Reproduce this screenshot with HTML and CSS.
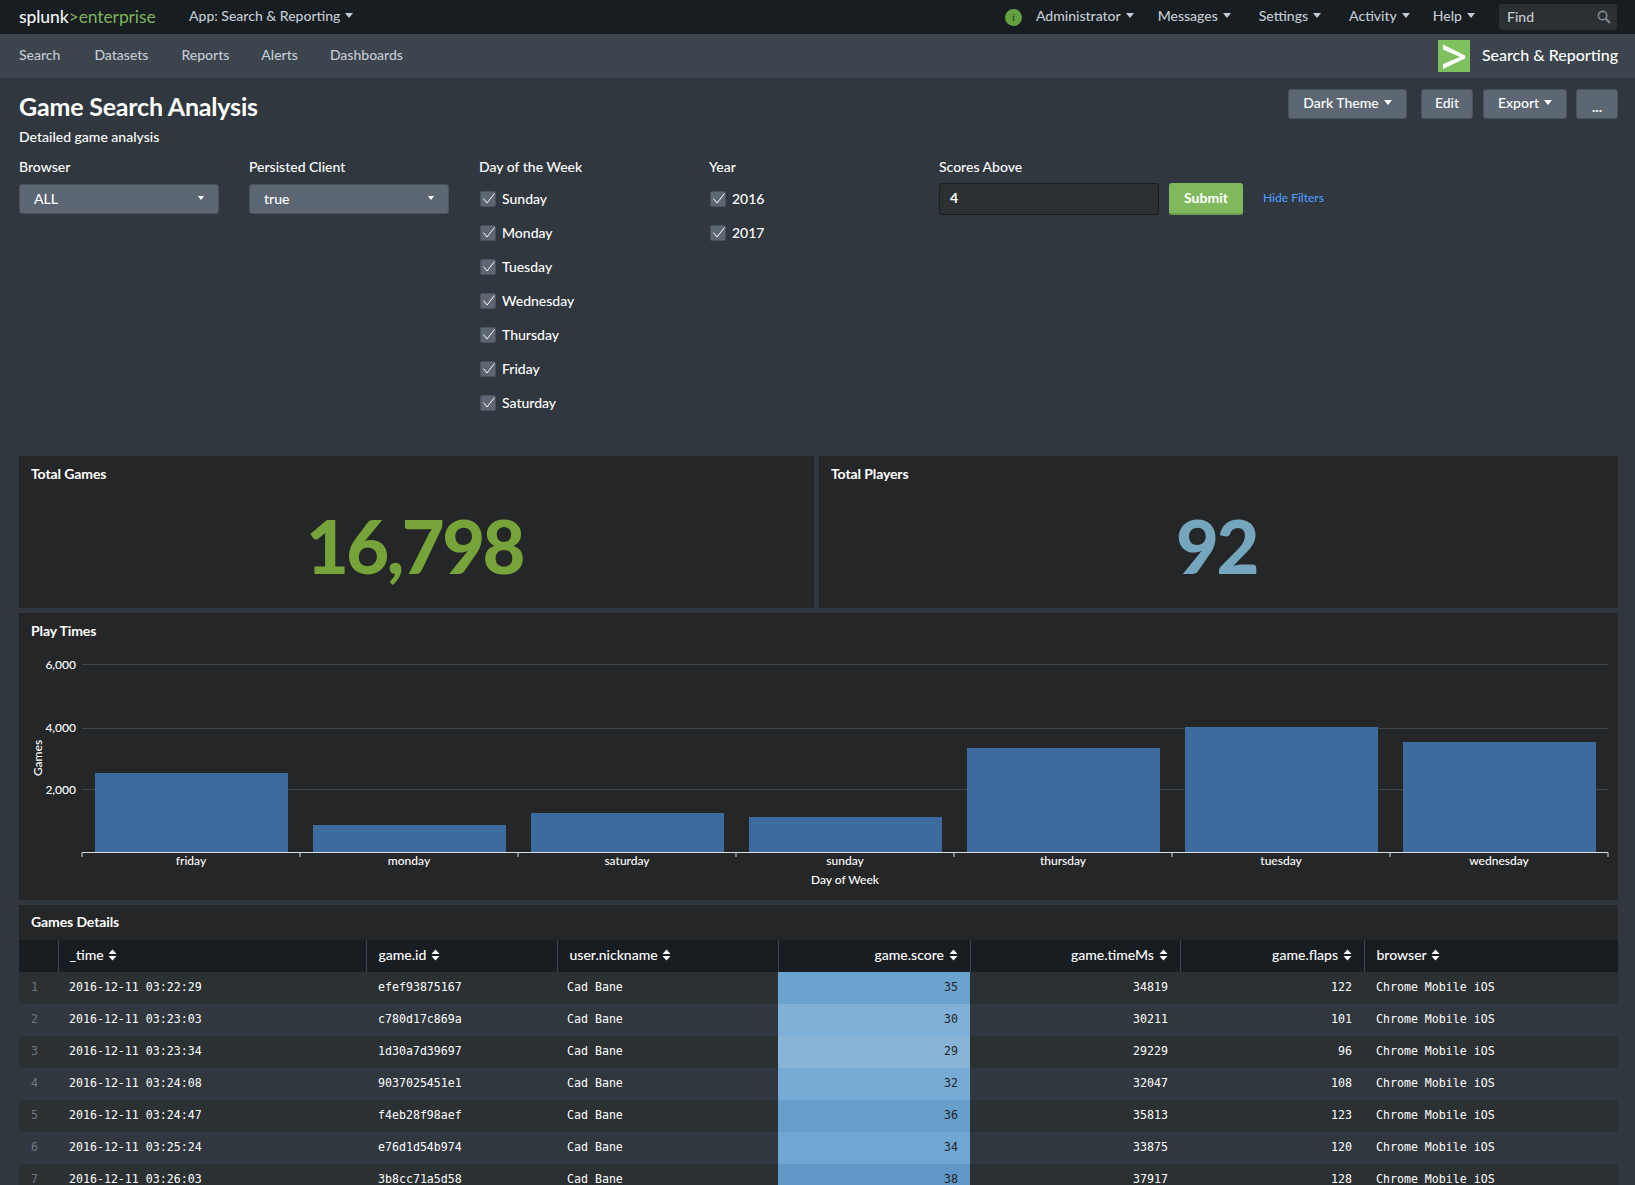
FILE: index.html
```html
<!DOCTYPE html>
<html lang="en">
<head>
<meta charset="utf-8">
<title>Game Search Analysis</title>
<link rel="stylesheet" href="styles.css">
</head>
<body>
<svg class="defs" width="0" height="0" aria-hidden="true">
  <symbol id="sort" viewBox="0 0 9 12"><path d="M4.5 0.5 8.5 5H0.5Z M0.5 7H8.5L4.5 11.5Z" fill="currentColor"/></symbol>
  <symbol id="check" viewBox="0 0 16 16"><path d="M3.5 7.6 7 12 14.5 2.5" fill="none" stroke="currentColor" stroke-width="1"/></symbol>
</svg>
<header class="topbar">
  <div class="logo"><span class="logo-splunk">splunk</span><span class="logo-ent">&gt;enterprise</span></div>
  <a class="top-item app-menu">App: Search &amp; Reporting<i class="caret"></i></a>
  <div class="top-right">
    <span class="info">i</span>
    <a class="top-item item-admin">Administrator<i class="caret"></i></a>
    <a class="top-item item-messages">Messages<i class="caret"></i></a>
    <a class="top-item item-settings">Settings<i class="caret"></i></a>
    <a class="top-item item-activity">Activity<i class="caret"></i></a>
    <a class="top-item item-help">Help<i class="caret"></i></a>
    <div class="find"><span>Find</span>
      <svg class="find-icon" viewBox="0 0 14 14" width="14" height="14"><circle cx="5.6" cy="5.6" r="4.2" fill="none" stroke="currentColor" stroke-width="1.6"/><path d="M8.8 8.8 13 13" stroke="currentColor" stroke-width="2.2"/></svg>
    </div>
  </div>
</header>
<nav class="appbar">
  <a class="nav-search">Search</a><a class="nav-datasets">Datasets</a><a>Reports</a><a>Alerts</a><a>Dashboards</a>
  <div class="app-name">
    <span class="app-icon"><svg viewBox="0 0 32 32" width="32" height="32"><path d="M5 4.5 27 15.5V18.5L5 29V24L22 17 5 9.5Z" fill="#fff"/></svg></span>
    <span class="app-title">Search &amp; Reporting</span>
  </div>
</nav>
<main class="dash">
  <div class="dash-head">
    <div>
      <h1>Game Search Analysis</h1>
      <p class="desc">Detailed game analysis</p>
    </div>
    <div class="actions">
      <button class="btn btn-theme">Dark Theme<i class="caret white"></i></button>
      <button class="btn btn-edit">Edit</button>
      <button class="btn btn-export">Export<i class="caret white"></i></button>
      <button class="btn btn-more">...</button>
    </div>
  </div>
  <section class="filters">
    <div class="field"><label>Browser</label><div class="select"><span>ALL</span><i class="caret white small"></i></div></div>
    <div class="field"><label>Persisted Client</label><div class="select"><span>true</span><i class="caret white small"></i></div></div>
    <div class="field"><label>Day of the Week</label>
      <ul class="checks">
        <li><span class="box"><svg><use href="#check"/></svg></span>Sunday</li>
        <li><span class="box"><svg><use href="#check"/></svg></span>Monday</li>
        <li><span class="box"><svg><use href="#check"/></svg></span>Tuesday</li>
        <li><span class="box"><svg><use href="#check"/></svg></span>Wednesday</li>
        <li><span class="box"><svg><use href="#check"/></svg></span>Thursday</li>
        <li><span class="box"><svg><use href="#check"/></svg></span>Friday</li>
        <li><span class="box"><svg><use href="#check"/></svg></span>Saturday</li>
      </ul>
    </div>
    <div class="field"><label>Year</label>
      <ul class="checks">
        <li><span class="box"><svg><use href="#check"/></svg></span>2016</li>
        <li><span class="box"><svg><use href="#check"/></svg></span>2017</li>
      </ul>
    </div>
    <div class="field"><label>Scores Above</label><div class="score-input">4</div></div>
    <button class="submit">Submit</button>
    <a class="hide-filters">Hide Filters</a>
  </section>
  <section class="singles">
    <div class="panel single"><h2>Total Games</h2><div class="big green">16,798</div></div>
    <div class="panel single"><h2>Total Players</h2><div class="big blue">92</div></div>
  </section>
  <section class="panel chart-panel">
    <h2>Play Times</h2>
    <svg class="chart" width="1599" height="248" viewBox="19 652 1599 248">
      <g class="grid">
        <path d="M82 664.5H1608M82 728.5H1608M82 789.5H1608"/>
      </g>
      <g class="bars">
        <rect x="95" y="773" width="193" height="79"/>
        <rect x="313" y="825" width="193" height="27"/>
        <rect x="531" y="813" width="193" height="39"/>
        <rect x="749" y="817" width="193" height="35"/>
        <rect x="967" y="748" width="193" height="104"/>
        <rect x="1185" y="727" width="193" height="125"/>
        <rect x="1403" y="742" width="193" height="110"/>
      </g>
      <path class="axis" d="M82 857V852.5H1608V857M300 852.5V857M518 852.5V857M736 852.5V857M954 852.5V857M1172 852.5V857M1390 852.5V857"/>
      <g class="ylab">
        <text x="76" y="669">6,000</text>
        <text x="76" y="732">4,000</text>
        <text x="76" y="794">2,000</text>
      </g>
      <g class="xlab">
        <text x="191" y="865">friday</text>
        <text x="409" y="865">monday</text>
        <text x="627" y="865">saturday</text>
        <text x="845" y="865">sunday</text>
        <text x="1063" y="865">thursday</text>
        <text x="1281" y="865">tuesday</text>
        <text x="1499" y="865">wednesday</text>
        <text x="845" y="884">Day of Week</text>
      </g>
      <text class="ytitle" transform="translate(42 758) rotate(-90)">Games</text>
    </svg>
  </section>
  <section class="panel table-panel">
    <h2>Games Details</h2>
    <table>
      <colgroup>
        <col class="c0"><col class="c1"><col class="c2"><col class="c3"><col class="c4"><col class="c5"><col class="c6"><col class="c7">
      </colgroup>
      <thead>
        <tr>
          <th></th>
          <th>_time <svg class="sort"><use href="#sort"/></svg></th>
          <th>game.id <svg class="sort"><use href="#sort"/></svg></th>
          <th>user.nickname <svg class="sort"><use href="#sort"/></svg></th>
          <th class="num">game.score <svg class="sort"><use href="#sort"/></svg></th>
          <th class="num">game.timeMs <svg class="sort"><use href="#sort"/></svg></th>
          <th class="num">game.flaps <svg class="sort"><use href="#sort"/></svg></th>
          <th>browser <svg class="sort"><use href="#sort"/></svg></th>
        </tr>
      </thead>
      <tbody>
        <tr><td class="idx">1</td><td>2016-12-11 03:22:29</td><td>efef93875167</td><td>Cad Bane</td><td class="num heat" style="background:#6ba3cf">35</td><td class="num">34819</td><td class="num">122</td><td>Chrome Mobile iOS</td></tr>
        <tr><td class="idx">2</td><td>2016-12-11 03:23:03</td><td>c780d17c869a</td><td>Cad Bane</td><td class="num heat" style="background:#7fb1d8">30</td><td class="num">30211</td><td class="num">101</td><td>Chrome Mobile iOS</td></tr>
        <tr><td class="idx">3</td><td>2016-12-11 03:23:34</td><td>1d30a7d39697</td><td>Cad Bane</td><td class="num heat" style="background:#88b4d7">29</td><td class="num">29229</td><td class="num">96</td><td>Chrome Mobile iOS</td></tr>
        <tr><td class="idx">4</td><td>2016-12-11 03:24:08</td><td>9037025451e1</td><td>Cad Bane</td><td class="num heat" style="background:#76abd5">32</td><td class="num">32047</td><td class="num">108</td><td>Chrome Mobile iOS</td></tr>
        <tr><td class="idx">5</td><td>2016-12-11 03:24:47</td><td>f4eb28f98aef</td><td>Cad Bane</td><td class="num heat" style="background:#669fcc">36</td><td class="num">35813</td><td class="num">123</td><td>Chrome Mobile iOS</td></tr>
        <tr><td class="idx">6</td><td>2016-12-11 03:25:24</td><td>e76d1d54b974</td><td>Cad Bane</td><td class="num heat" style="background:#6ea6d4">34</td><td class="num">33875</td><td class="num">120</td><td>Chrome Mobile iOS</td></tr>
        <tr><td class="idx">7</td><td>2016-12-11 03:26:03</td><td>3b8cc71a5d58</td><td>Cad Bane</td><td class="num heat" style="background:#6097c7">38</td><td class="num">37917</td><td class="num">128</td><td>Chrome Mobile iOS</td></tr>
      </tbody>
    </table>
  </section>
</main>
</body>
</html>
```

FILE: styles.css
```css
* { box-sizing: border-box; }
html, body { margin: 0; height: 100%; overflow: hidden; }
body { background: #31373e; color: #fff; font-family: Lato, "Open Sans", "Liberation Sans", sans-serif; font-size: 14px; font-weight: 500; }
.defs { position: absolute; }
.topbar { height: 34px; background: #171d21; display: flex; align-items: center; padding: 0 18px 0 19px; }
.logo { font-size: 17.5px; width: 170px; padding-bottom: 2px; letter-spacing: -0.1px; }
.logo-splunk { color: #f2f4f5; }
.logo-ent { color: #7fb35a; font-weight: 400; }
.top-item { color: #c3cbd4; font-size: 14px; display: inline-flex; align-items: center; padding-bottom: 3px; }
.caret { display: inline-block; width: 0; height: 0; margin-left: 5px; border-left: 4px solid transparent; border-right: 4px solid transparent; border-top: 5px solid #c3cbd4; }
.caret.white { border-top-color: #fff; }
.caret.small { border-left-width: 3.5px; border-right-width: 3.5px; border-top-width: 4px; }
.top-right { margin-left: auto; display: flex; align-items: center; }
.info { width: 17px; height: 17px; border-radius: 50%; background: #65a040; color: #1e2a14; font: 11px "Liberation Serif", serif; text-align: center; line-height: 17px; margin-right: 14px; }
.item-admin { margin-right: 24px; }
.item-messages { margin-right: 28px; }
.item-settings { margin-right: 28px; }
.item-activity { margin-right: 23px; }
.item-help { margin-right: 24px; }
.find { width: 118px; height: 26px; background: #2b3033; border-radius: 3px; display: flex; align-items: center; justify-content: space-between; padding: 0 6px 0 8px; color: #c3cbd4; }
.find span { padding-bottom: 2px; }
.find-icon { color: #7d8791; }
.appbar { height: 44px; background: #3c444d; display: flex; align-items: center; padding: 0 17px 0 19px; gap: 32px; }
.appbar a { color: #c3cbd4; font-size: 14px; padding-bottom: 4px; }
.appbar .nav-search { margin-right: 2px; }
.appbar .nav-datasets { margin-right: 1px; }
.app-name { margin-left: auto; display: flex; align-items: center; gap: 12px; font-size: 16px; color: #fff; }
.app-title { padding-bottom: 4px; }
.app-icon { display: block; width: 32px; height: 32px; background: #7fc05f; }
.app-icon svg { display: block; }
.dash { padding: 0 17px 0 19px; }
.dash-head { display: flex; justify-content: space-between; height: 79px; }
h1 { margin: 13px 0 0; font-size: 25px; line-height: 30px; font-weight: 700; letter-spacing: -0.2px; }
.desc { margin: 7px 0 0; font-size: 14px; line-height: 18px; }
.actions { display: flex; align-items: flex-start; padding-top: 11px; }
.btn { height: 30px; background: #5c6773; border: 1px solid #4a525b; border-radius: 3px; color: #fff; font: 500 14px Lato, sans-serif; padding: 0 0 3px; display: flex; align-items: center; justify-content: center; }
.btn-theme { width: 119px; margin-right: 14px; }
.btn-edit { width: 52px; margin-right: 10px; }
.btn-export { width: 84px; margin-right: 9px; }
.btn-more { width: 42px; font-weight: 700; padding: 4px 0 0; }
.filters { display: flex; align-items: flex-start; height: 299px; }
.field { width: 230px; }
.field label { display: block; font-size: 14px; line-height: 20px; margin-bottom: 7px; }
.select { width: 200px; height: 30px; background: #5c6773; border: 1px solid #4a525b; border-radius: 3px; display: flex; align-items: center; justify-content: space-between; padding: 0 14px 2px; }
.checks { list-style: none; margin: 14px 0 0; padding: 0; }
.checks li { height: 34px; display: flex; align-items: flex-start; margin-left: 1px; line-height: 16px; }
.box { width: 16px; height: 16px; background: #5c6773; border: 1px solid #4a525b; border-radius: 2px; margin-right: 6px; color: #fff; display: block; flex: none; position: relative; }
.box svg { position: absolute; left: -1px; top: -1px; width: 16px; height: 16px; display: block; overflow: visible; }
.score-input { width: 220px; height: 32px; background: #2b3033; border: 1px solid #171d21; border-radius: 3px; padding-left: 10px; line-height: 28px; margin-top: -1px; font-weight: 700; }
.submit { margin: 26px 0 0; width: 74px; height: 32px; background: #7fb85d; border: 0; border-bottom: 2px solid #6d9f50; border-radius: 3px; color: #fff; font: 700 14px Lato, sans-serif; padding: 0 0 2px; }
.hide-filters { margin: 33px 0 0 20px; color: #4d9bff; font-size: 12px; line-height: 16px; }
.singles { display: flex; gap: 5px; }
.panel { background: #242628; }
.panel h2 { margin: 0; font-size: 14px; font-weight: 700; line-height: 18px; padding: 9px 12px 0; letter-spacing: -0.1px; }
.single { width: 795px; height: 152px; }
.single:last-child { width: 799px; }
.big { text-align: center; font-size: 74px; line-height: 74px; font-weight: 900; letter-spacing: -2.5px; margin-top: 26px; padding-right: 4px; }
.green { color: #76a33a; }
.blue { color: #76a6bd; }
.chart-panel { margin-top: 5px; height: 287px; }
.chart { display: block; margin-top: 12px; }
.chart text { font-family: Lato, sans-serif; font-size: 12px; font-weight: 500; fill: #fff; }
.grid path { stroke: #3c444d; stroke-width: 1; fill: none; }
.bars rect { fill: #3e6b9d; }
.axis { stroke: #d8dde2; stroke-width: 1; fill: none; }
.ylab text { text-anchor: end; }
.xlab text { text-anchor: middle; }
.ytitle { text-anchor: middle; }
.table-panel { margin-top: 5px; }
.table-panel h2 { height: 35px; padding-top: 8px; }
table { width: 1599px; border-collapse: collapse; table-layout: fixed; }
.c0 { width: 39px; } .c1 { width: 308px; } .c2 { width: 191px; } .c3 { width: 221px; }
.c4 { width: 192px; } .c5 { width: 210px; } .c6 { width: 184px; } .c7 { width: 254px; }
th { height: 32px; background: #171d21; font-weight: 500; font-size: 14px; text-align: left; padding: 0 12px 3px; border-left: 1px solid #3c444d; }
th:first-child { border-left: 0; }
th:nth-child(2) { padding-left: 11px; }
th.num, td.num { text-align: right; }
.sort { width: 9px; height: 12px; color: #fff; vertical-align: -1px; margin-left: 1px; }
td { height: 32px; padding: 0 12px 2px 11px; font: 11.6px "DejaVu Sans Mono", monospace; white-space: nowrap; }
td:nth-child(3), td:nth-child(8) { padding-left: 12px; }
td:nth-child(4) { padding-left: 10px; }
tbody tr:nth-child(odd) td { background-color: #2b3033; }
tbody tr:nth-child(even) td { background-color: #31373e; }
td.idx { color: #6f7780; text-align: center; padding: 0 8px 2px 0; }
tbody tr td.heat { color: #1f2428; }
```
